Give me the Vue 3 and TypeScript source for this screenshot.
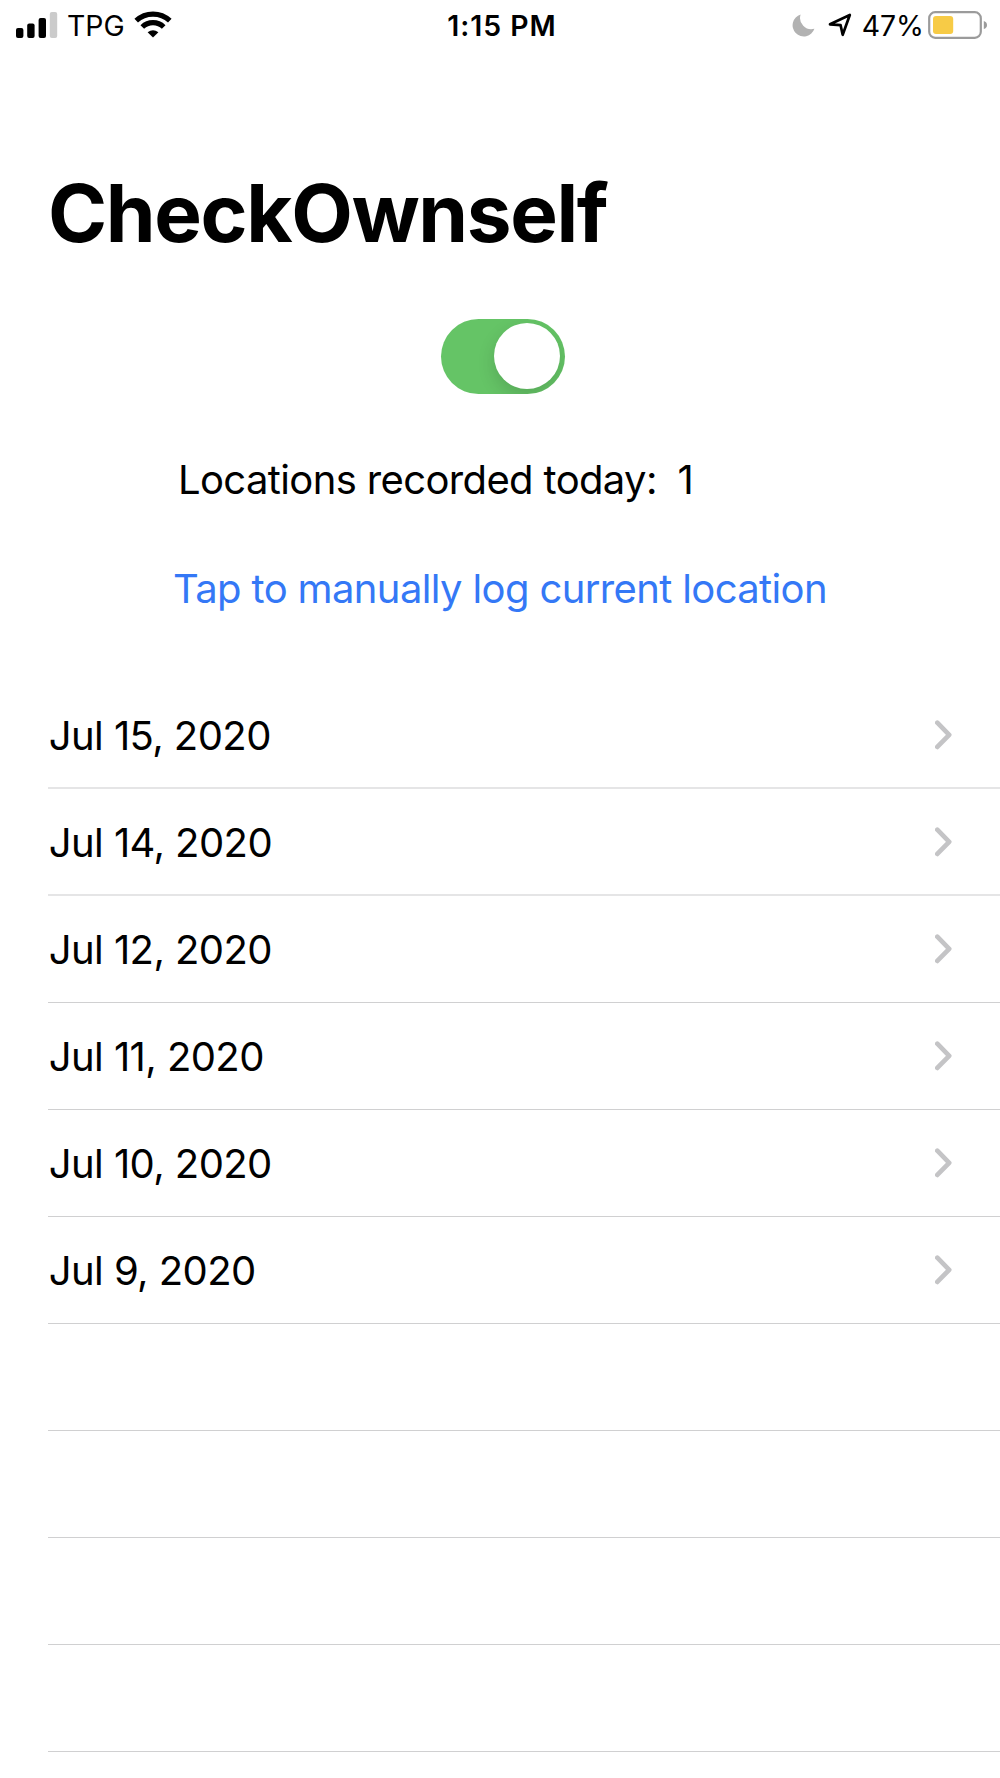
<script setup lang="ts">
import { ref } from 'vue'

const enabled = ref(true)
const recordedToday = ref(1)
const days: string[] = [
  'Jul 15, 2020',
  'Jul 14, 2020',
  'Jul 12, 2020',
  'Jul 11, 2020',
  'Jul 10, 2020',
  'Jul 9, 2020',
]
const emptyRows = 4
</script>

<template>
  <div class="screen">
    <header class="status">
      <div class="status-left">
        <svg class="signal" width="42" height="27" viewBox="0 0 42 27">
          <rect x="0" y="16" width="7.4" height="10" rx="2" />
          <rect x="11.2" y="11.5" width="7.4" height="14.5" rx="2" />
          <rect x="22.6" y="6" width="7.4" height="20" rx="2" />
          <rect x="33.8" y="0" width="7.4" height="26" rx="2" fill="#cbcbcb" />
        </svg>
        <span class="carrier">TPG</span>
        <svg class="wifi" width="38" height="28" viewBox="0 0 38 28">
          <g fill="none" stroke="#000" stroke-width="5.2">
            <path d="M2.2 9.7 A24.5 24.5 0 0 1 35.8 9.7" />
            <path d="M8.3 16 A15.4 15.4 0 0 1 29.7 16" />
          </g>
          <path d="M19 26.5 L13.6 21.3 Q19 17.4 24.4 21.3 Z" />
        </svg>
      </div>
      <div class="time">1:15 PM</div>
      <div class="status-right">
        <svg class="moon" width="23" height="23" viewBox="0 0 23 23">
          <path d="M8.6 0.5 A11.2 11.2 0 1 0 22.4 14.8 A11.3 11.3 0 0 1 8.6 0.5 Z" fill="#b2b2b2" />
        </svg>
        <svg class="arrow" width="24" height="24" viewBox="0 0 24 24">
          <path d="M2 11.3 L21.8 2 L14.7 21.8 L12.6 12.2 Z" fill="none" stroke="#000" stroke-width="2.7" stroke-linejoin="round" />
        </svg>
        <span class="percent">47%</span>
        <svg class="battery" width="60" height="28" viewBox="0 0 60 28">
          <rect x="1.2" y="1.2" width="51.6" height="25.6" rx="6" fill="#fff" stroke="#9b9b9b" stroke-width="2.2" />
          <rect x="5" y="5" width="20.2" height="18" rx="3" fill="#f7cb46" />
          <path d="M55.8 10 Q59 11 59 14 Q59 17 55.8 18 Z" fill="#9b9b9b" />
        </svg>
      </div>
    </header>

    <h1 class="title">CheckOwnself</h1>

    <button class="switch" :class="{ on: enabled }" role="switch" :aria-checked="enabled" @click="enabled = !enabled">
      <span class="knob"></span>
    </button>

    <p class="recorded"><span>Locations recorded today:</span><span class="count">{{ recordedToday }}</span></p>
    <button class="log" @click="recordedToday++">Tap to manually log current location</button>

    <ul class="list">
      <li v-for="day in days" :key="day" class="row">
        <span class="day">{{ day }}</span>
        <svg class="chevron" width="18" height="30" viewBox="0 0 18 30">
          <path d="M2.3 2.7 L14.2 14.8 L2.3 26.9" fill="none" stroke="#c4c4c6" stroke-width="4.7" stroke-linecap="round" stroke-linejoin="round" />
        </svg>
      </li>
      <li v-for="n in emptyRows" :key="n" class="row"></li>
    </ul>
  </div>
</template>

<style>
body {
  margin: 0;
  background: #fff;
}
</style>

<style scoped>
.screen {
  display: flex;
  flex-direction: column;
  box-sizing: border-box;
  width: 1000px;
  height: 1778px;
  overflow: hidden;
  background: #fff;
  color: #000;
  font-family: Inter, "Liberation Sans", sans-serif;
  font-size: 40px;
  letter-spacing: -0.63px;
}
.status {
  display: grid;
  grid-template-columns: 1fr auto 1fr;
  align-items: center;
  height: 50px;
  padding: 0 12px 0 16px;
  font-size: 28.4px;
  line-height: 50px;
  letter-spacing: 0;
}
.status-left,
.status-right {
  display: flex;
  align-items: center;
}
.status-left svg,
.status-right svg {
  margin-bottom: 1px;
}
.status-right {
  justify-content: flex-end;
}
.carrier {
  margin-left: 9px;
  padding-top: 1px;
}
.wifi {
  margin-left: 9.5px;
}
.time {
  padding-top: 1px;
  font-weight: 600;
  letter-spacing: 1px;
}
.arrow {
  margin-left: 13px;
}
.percent {
  margin-left: 10px;
  padding-top: 1px;
}
.battery {
  margin-left: 4px;
}
.title {
  margin: 113px 0 0 48px;
  height: 100px;
  line-height: 100px;
  font-size: 80px;
  font-weight: 700;
  letter-spacing: -1.35px;
}
.switch {
  align-self: flex-start;
  display: flex;
  align-items: center;
  box-sizing: border-box;
  width: 124px;
  height: 75px;
  margin: 56px 0 0 441px;
  padding: 0 5px 0.5px;
  border: 0;
  border-radius: 38px;
  background: #e9e9ea;
  overflow: hidden;
}
.switch.on {
  justify-content: flex-end;
  background: #65c466;
}
.knob {
  width: 66px;
  height: 66px;
  border-radius: 50%;
  background: #fff;
  box-shadow: 0 7px 18px rgba(0, 0, 0, 0.14);
}
.recorded {
  display: flex;
  height: 60px;
  margin: 56px 0 0 178px;
  line-height: 60px;
}
.count {
  margin-left: 20.5px;
}
.log {
  align-self: flex-start;
  height: 60px;
  margin: 49px 0 0 173px;
  padding: 0;
  border: 0;
  background: none;
  color: #3478f6;
  font: inherit;
  letter-spacing: inherit;
  line-height: 60px;
  white-space: nowrap;
}
.list {
  margin: 63px 0 0 48px;
  padding: 0;
  list-style: none;
}
.row {
  display: flex;
  align-items: center;
  justify-content: space-between;
  box-sizing: border-box;
  height: 107px;
  padding-right: 47px;
  border-bottom: 1px solid #d0d0d1;
}
.row:nth-child(-n + 2) {
  border-bottom: 2px solid #e5e5e6;
}
.day {
  margin-left: 0.8px;
  padding-top: 1px;
  letter-spacing: -0.58px;
}
</style>
